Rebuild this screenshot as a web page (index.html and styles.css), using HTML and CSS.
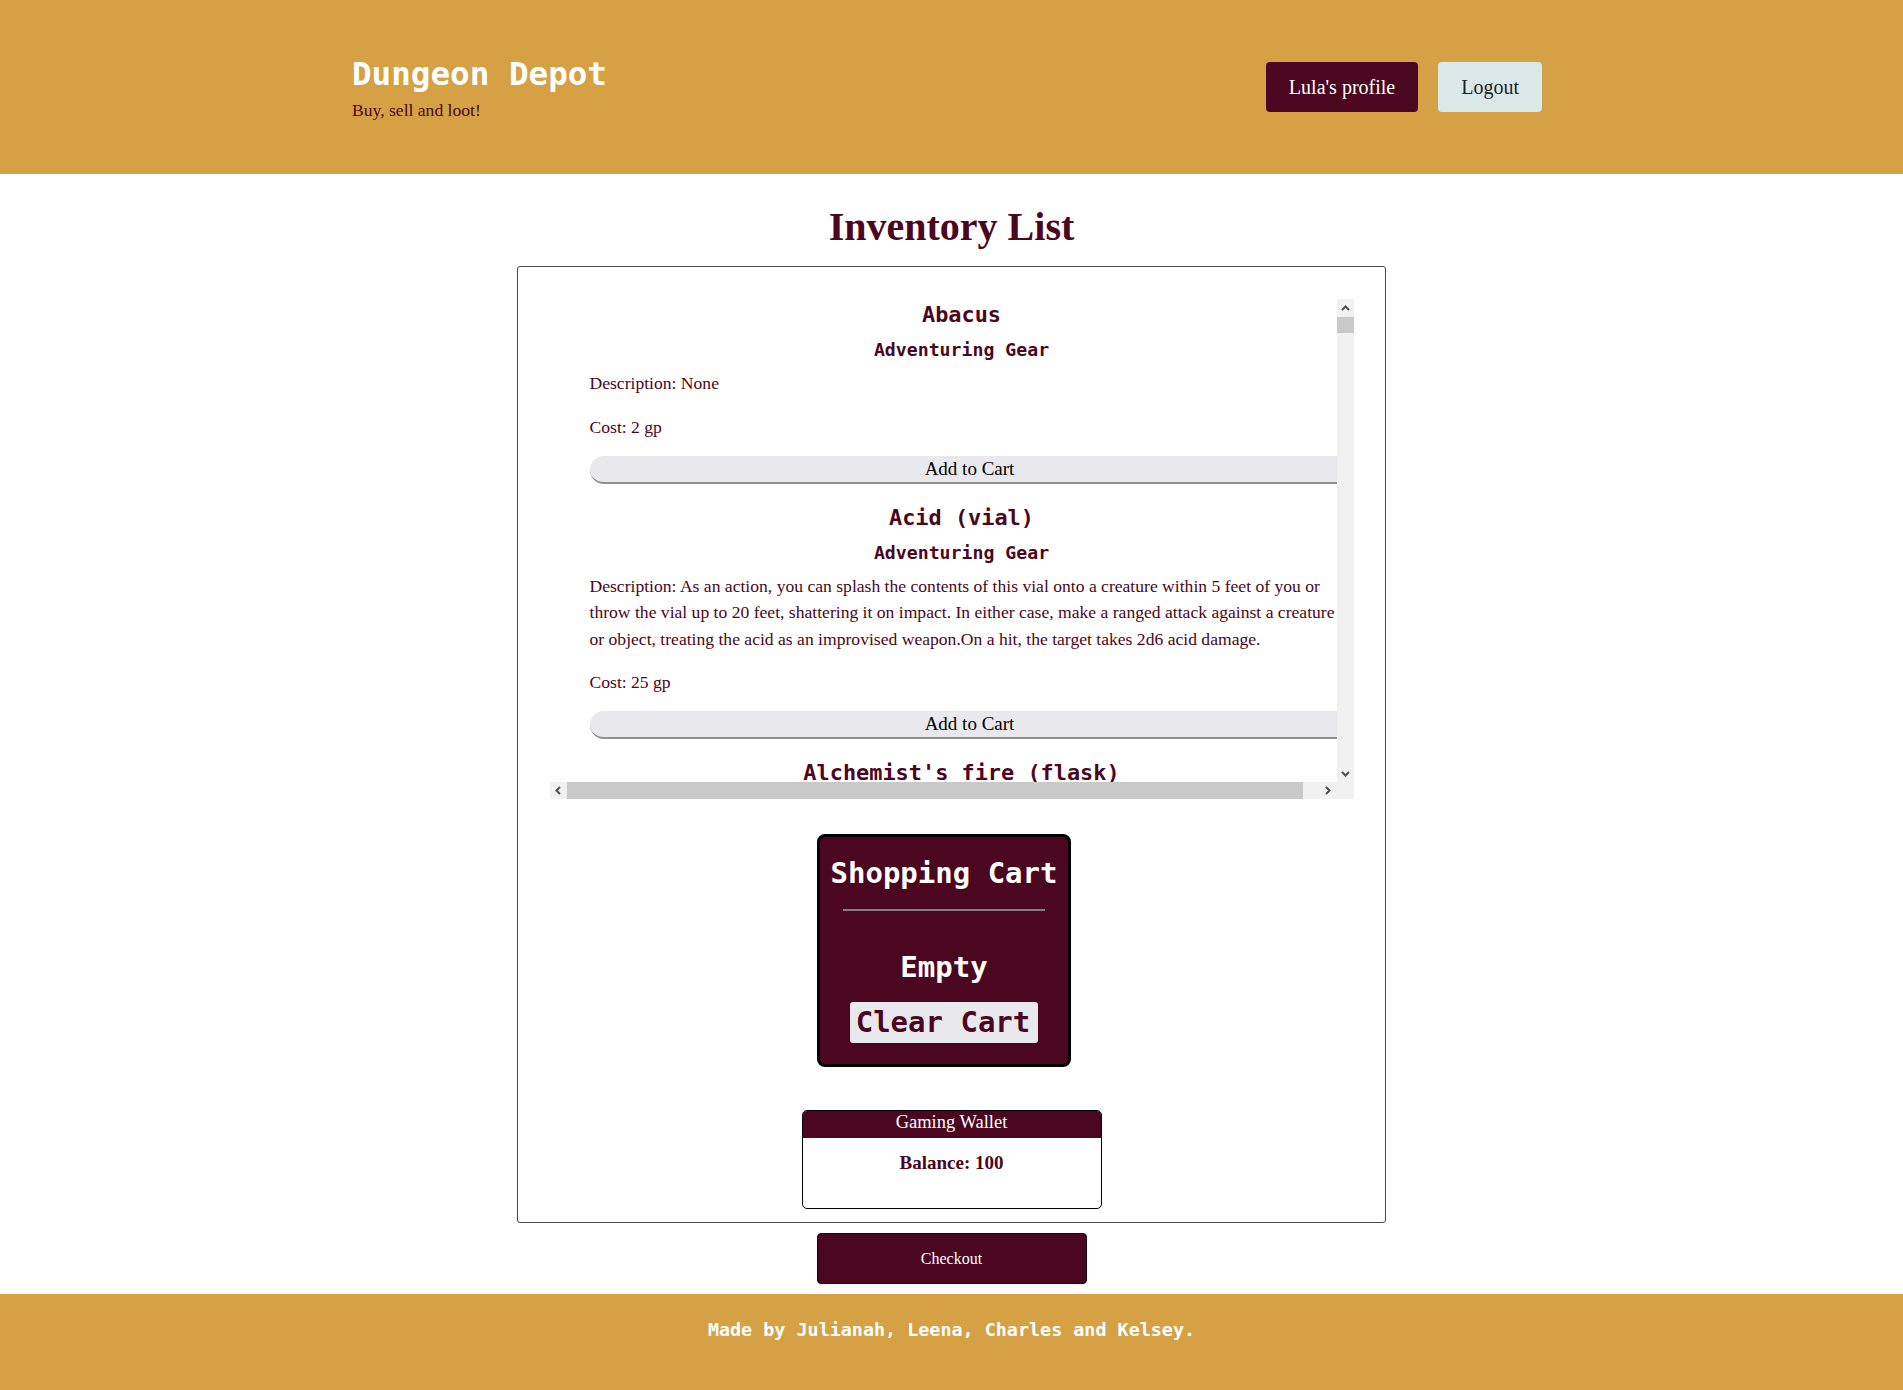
FILE: index.html
```html
<!DOCTYPE html>
<html lang="en">
<head>
<meta charset="utf-8">
<title>Dungeon Depot</title>
<link rel="stylesheet" href="styles.css">
</head>
<body>
<header class="site-header">
  <div class="brand">
    <h1 class="brand-title">Dungeon Depot</h1>
    <p class="brand-tagline">Buy, sell and loot!</p>
  </div>
  <nav class="nav">
    <button class="nav-btn nav-btn-profile">Lula's profile</button>
    <button class="nav-btn nav-btn-logout">Logout</button>
  </nav>
</header>

<main class="main">
  <h2 class="page-title">Inventory List</h2>
  <section class="panel">
    <div class="inventory">
      <div class="inventory-viewport">
        <div class="inventory-list">
          <article class="item"><h3 class="item-name">Abacus</h3><h4 class="item-cat">Adventuring Gear</h4><p class="item-desc">Description: None</p><p class="item-cost">Cost: 2 gp</p><button class="add-btn">Add to Cart</button></article>
          <article class="item"><h3 class="item-name">Acid (vial)</h3><h4 class="item-cat">Adventuring Gear</h4><p class="item-desc">Description: As an action, you can splash the contents of this vial onto a creature within 5 feet of you or throw the vial up to 20 feet, shattering it on impact. In either case, make a ranged attack against a creature or object, treating the acid as an improvised weapon.On a hit, the target takes 2d6 acid damage.</p><p class="item-cost">Cost: 25 gp</p><button class="add-btn">Add to Cart</button></article>
          <article class="item"><h3 class="item-name">Alchemist's fire (flask)</h3><h4 class="item-cat">Adventuring Gear</h4><p class="item-desc">Description: This sticky, adhesive fluid ignites when exposed to air. As an action, you can throw this flask up to 20 feet, shattering it on impact. Make a ranged attack against a creature or object, treating the alchemist's fire as an improvised weapon. On a hit, the target takes 1d4 fire damage at the start of each of its turns. A creature can end this damage by using its action to make a DC 10 Dexterity check to extinguish the flames.</p><p class="item-cost">Cost: 50 gp</p><button class="add-btn">Add to Cart</button></article>
          <article class="item"><h3 class="item-name">Arrow</h3><h4 class="item-cat">Ammunition</h4><p class="item-desc">Description: None</p><p class="item-cost">Cost: 1 gp</p><button class="add-btn">Add to Cart</button></article>
          <article class="item"><h3 class="item-name">Amulet</h3><h4 class="item-cat">Holy Symbols</h4><p class="item-desc">Description: None</p><p class="item-cost">Cost: 5 gp</p><button class="add-btn">Add to Cart</button></article>
          <article class="item"><h3 class="item-name">Antitoxin (vial)</h3><h4 class="item-cat">Adventuring Gear</h4><p class="item-desc">Description: A creature that drinks this vial of liquid gains advantage on saving throws against poison for 1 hour. It confers no benefit to undead or constructs.</p><p class="item-cost">Cost: 50 gp</p><button class="add-btn">Add to Cart</button></article>
          <article class="item"><h3 class="item-name">Backpack</h3><h4 class="item-cat">Adventuring Gear</h4><p class="item-desc">Description: None</p><p class="item-cost">Cost: 2 gp</p><button class="add-btn">Add to Cart</button></article>
          <article class="item"><h3 class="item-name">Ball bearings (bag of 1,000)</h3><h4 class="item-cat">Adventuring Gear</h4><p class="item-desc">Description: None</p><p class="item-cost">Cost: 1 gp</p><button class="add-btn">Add to Cart</button></article>
        </div>
      </div>
      <div class="sb sb-v">
        <span class="sb-btn sb-up"><svg width="9" height="6" viewBox="0 0 9 6"><polyline points="1,5 4.5,1.5 8,5" fill="none" stroke="#505050" stroke-width="2"/></svg></span>
        <span class="sb-thumb sb-thumb-v"></span>
        <span class="sb-btn sb-down"><svg width="9" height="6" viewBox="0 0 9 6"><polyline points="1,1 4.5,4.5 8,1" fill="none" stroke="#505050" stroke-width="2"/></svg></span>
      </div>
      <div class="sb sb-h">
        <span class="sb-btn sb-left"><svg width="6" height="9" viewBox="0 0 6 9"><polyline points="5,1 1.5,4.5 5,8" fill="none" stroke="#505050" stroke-width="2"/></svg></span>
        <span class="sb-thumb sb-thumb-h"></span>
        <span class="sb-btn sb-right"><svg width="6" height="9" viewBox="0 0 6 9"><polyline points="1,1 4.5,4.5 1,8" fill="none" stroke="#505050" stroke-width="2"/></svg></span>
      </div>
      <div class="sb-corner"></div>
    </div>

    <div class="cart-wrap">
      <div class="cart">
        <h3 class="cart-title">Shopping Cart</h3>
        <hr class="cart-rule">
        <p class="cart-empty">Empty</p>
        <button class="clear-btn">Clear Cart</button>
      </div>
    </div>

    <div class="wallet">
      <div class="wallet-head">Gaming Wallet</div>
      <p class="wallet-balance">Balance: 100</p>
    </div>
  </section>
  <button class="checkout">Checkout</button>
</main>

<footer class="site-footer">
  <p class="footer-text">Made by Julianah, Leena, Charles and Kelsey.</p>
</footer>
</body>
</html>
```

FILE: styles.css
```css
* {
  box-sizing: border-box;
}

html, body {
  margin: 0;
  padding: 0;
}

body {
  font-family: "Liberation Serif", "Times New Roman", serif;
  color: #4b0620;
  background: #ffffff;
}

/* ---------- header ---------- */
.site-header {
  height: 174px;
  background: #d5a144;
  display: flex;
  align-items: center;
  justify-content: space-between;
  padding: 0 361px 0 352px;
}

.brand-title {
  margin: 0 0 6px;
  font-family: "DejaVu Sans Mono", "Liberation Mono", monospace;
  font-weight: bold;
  font-size: 32.6px;
  line-height: 40px;
  color: #ffffff;
}

.brand-tagline {
  margin: 0;
  font-size: 17.6px;
  line-height: 20px;
  color: #4b0620;
}

.nav {
  display: flex;
  gap: 20px;
}

.nav-btn {
  height: 50px;
  padding: 0 23px;
  border: none;
  border-radius: 4px;
  font-family: "Liberation Serif", "Times New Roman", serif;
  font-size: 20px;
  cursor: pointer;
}

.nav-btn-profile {
  background: #4b0620;
  color: #ffffff;
}

.nav-btn-logout {
  background: #d9e8e8;
  color: #1f1f1f;
}

/* ---------- main ---------- */
.main {
  padding-top: 30px;
}

.page-title {
  margin: 0 0 16px;
  text-align: center;
  font-size: 40px;
  line-height: 46px;
  font-weight: bold;
  color: #4b0620;
}

.panel {
  width: 869px;
  margin: 0 auto;
  border: 1px solid #4a4a4a;
  border-radius: 3px;
  padding: 32px 0 13px;
}

/* ---------- inventory scroll area ---------- */
.inventory {
  position: relative;
  width: 804px;
  height: 500px;
  margin: 0 auto;
  background: #ffffff;
}

.inventory-viewport {
  width: 787px;
  height: 483px;
  overflow: hidden;
}

.inventory-list {
  width: 807px;
  padding: 2px 0 0 40px;
}

.item-name {
  width: 744px;
  margin: 0 0 9px;
  text-align: center;
  font-family: "DejaVu Sans Mono", "Liberation Mono", monospace;
  font-weight: bold;
  font-size: 21.9px;
  line-height: 28px;
  color: #4b0620;
}

.item-cat {
  width: 744px;
  margin: 0 0 8px;
  text-align: center;
  font-family: "DejaVu Sans Mono", "Liberation Mono", monospace;
  font-weight: bold;
  font-size: 18.2px;
  line-height: 24px;
  color: #4b0620;
}

.item-desc {
  width: 752px;
  margin: 0 0 17px;
  font-size: 17.6px;
  line-height: 26.5px;
}

.item-cost {
  margin: 0 0 15.5px;
  font-size: 17.6px;
  line-height: 26.5px;
}

.add-btn {
  display: block;
  width: 760px;
  height: 28px;
  margin: 0 0 20px;
  padding: 0;
  border: none;
  border-bottom: 2px solid #8f8f8f;
  border-radius: 14px;
  background: #e9e9ed;
  color: #000000;
  font-family: "Liberation Serif", "Times New Roman", serif;
  font-size: 19px;
  line-height: 26px;
  cursor: pointer;
}

/* fake classic scrollbars (drawn over the clipped list) */
.sb {
  position: absolute;
  background: #f1f1f1;
}

.sb-v {
  top: 0;
  right: 0;
  width: 17px;
  height: 483px;
}

.sb-h {
  left: 0;
  bottom: 0;
  width: 787px;
  height: 17px;
}

.sb-corner {
  position: absolute;
  right: 0;
  bottom: 0;
  width: 17px;
  height: 17px;
  background: #f1f1f1;
}

.sb-btn {
  position: absolute;
  width: 17px;
  height: 17px;
  display: flex;
  align-items: center;
  justify-content: center;
}

.sb-up { top: 0; left: 0; }
.sb-down { bottom: 0; left: 0; }
.sb-left { top: 0; left: 0; }
.sb-right { top: 0; right: 0; }

.sb-thumb {
  position: absolute;
  background: #c9c9c9;
}

.sb-thumb-v {
  top: 18px;
  left: 0;
  width: 17px;
  height: 16px;
}

.sb-thumb-h {
  top: 0;
  left: 17px;
  width: 736px;
  height: 17px;
}

/* ---------- cart ---------- */
.cart-wrap {
  display: flex;
  justify-content: center;
  padding-right: 15px;
  margin-top: 35px;
}

.cart {
  width: 254px;
  height: 233px;
  padding-top: 18px;
  background: #4b0620;
  border: 3px solid #000000;
  border-radius: 8px;
  text-align: center;
  color: #ffffff;
  font-family: "DejaVu Sans Mono", "Liberation Mono", monospace;
  font-weight: bold;
}

.cart-title {
  margin: 0;
  font-size: 29px;
  line-height: 36px;
}

.cart-rule {
  width: 202px;
  height: 0;
  margin: 18px auto 0;
  border: 0;
  border-top: 2px solid #808080;
}

.cart-empty {
  margin: 38px 0 0;
  font-size: 29px;
  line-height: 36px;
}

.clear-btn {
  width: 188px;
  height: 41px;
  margin-top: 17px;
  padding: 0 2px 0 0;
  border: none;
  border-radius: 3px;
  background: #e9e9ed;
  color: #4b0620;
  font-family: "DejaVu Sans Mono", "Liberation Mono", monospace;
  font-weight: bold;
  font-size: 29px;
  line-height: 41px;
  cursor: pointer;
}

/* ---------- wallet ---------- */
.wallet {
  width: 300px;
  height: 99px;
  margin: 43px auto 0;
  border: 1px solid #000000;
  border-radius: 5px;
  overflow: hidden;
}

.wallet-head {
  padding-bottom: 5px;
  background: #4b0620;
  color: #ffffff;
  text-align: center;
  font-size: 18.5px;
  line-height: 22px;
}

.wallet-balance {
  margin: 0;
  padding-top: 14px;
  text-align: center;
  font-weight: bold;
  font-size: 19px;
  line-height: 22px;
}

/* ---------- checkout ---------- */
.checkout {
  display: block;
  width: 270px;
  height: 51px;
  margin: 10px auto 0;
  background: #4b0620;
  color: #ffffff;
  border: 1px solid #1a0008;
  border-radius: 4px;
  font-family: "Liberation Serif", "Times New Roman", serif;
  font-size: 16px;
  cursor: pointer;
}

/* ---------- footer ---------- */
.site-footer {
  height: 96px;
  margin-top: 10px;
  padding-top: 24px;
  background: #d5a144;
}

.footer-text {
  margin: 0;
  text-align: center;
  font-family: "DejaVu Sans Mono", "Liberation Mono", monospace;
  font-weight: bold;
  font-size: 18.4px;
  line-height: 24px;
  color: #ffffff;
}
```
